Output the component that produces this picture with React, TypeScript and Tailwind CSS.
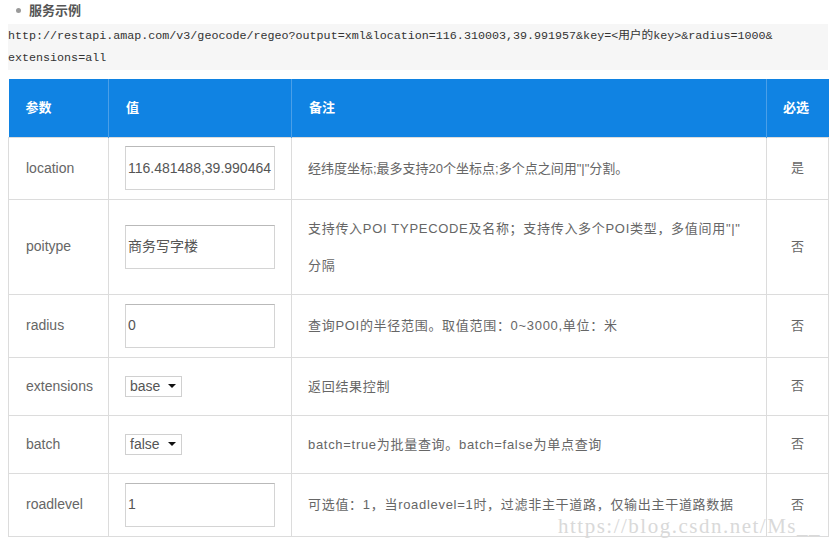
import React from "react";

const sans = '"Liberation Sans", Arial, "Noto Sans CJK SC", sans-serif';
const mono = '"Liberation Mono", "DejaVu Sans Mono", "Noto Sans CJK SC", monospace';

function TextInput({ value }: { value: string }) {
  return (
    <div className="w-[150px] h-[44px] border border-[#d4d4d4] border-t-[#b9b9b9] bg-white flex items-center pl-[2px] overflow-hidden whitespace-nowrap text-[14px] text-[#555]">
      {value}
    </div>
  );
}

function SelectBox({ value }: { value: string }) {
  return (
    <div className="w-[57px] h-[21px] border border-[#d0d0d0] bg-white flex items-center pl-[4px] pr-[5px] text-[14px] text-[#555] leading-none">
      <span className="flex-1">{value}</span>
      <span className="w-0 h-0 border-l-[4px] border-r-[4px] border-t-[4px] border-l-transparent border-r-transparent border-t-[#111]" />
    </div>
  );
}

type Row = {
  name: string;
  control: React.ReactNode;
  desc: React.ReactNode;
  req: string;
  h: string;
  wide: boolean;
};

const rows: Row[] = [
  {
    name: "location",
    control: <TextInput value="116.481488,39.990464" />,
    desc: '经纬度坐标;最多支持20个坐标点;多个点之间用"|"分割。',
    req: "是",
    h: "h-[62px]",
    wide: false,
  },
  {
    name: "poitype",
    control: <TextInput value="商务写字楼" />,
    desc: (
      <>
        支持传入POI TYPECODE及名称；支持传入多个POI类型，多值间用"|"
        <br />
        分隔
      </>
    ),
    req: "否",
    h: "h-[95px]",
    wide: true,
  },
  {
    name: "radius",
    control: <TextInput value="0" />,
    desc: "查询POI的半径范围。取值范围：0~3000,单位：米",
    req: "否",
    h: "h-[63px]",
    wide: true,
  },
  {
    name: "extensions",
    control: <SelectBox value="base" />,
    desc: "返回结果控制",
    req: "否",
    h: "h-[57px]",
    wide: true,
  },
  {
    name: "batch",
    control: <SelectBox value="false" />,
    desc: "batch=true为批量查询。batch=false为单点查询",
    req: "否",
    h: "h-[57px]",
    wide: true,
  },
  {
    name: "roadlevel",
    control: <TextInput value="1" />,
    desc: "可选值：1，当roadlevel=1时，过滤非主干道路，仅输出主干道路数据",
    req: "否",
    h: "h-[63px]",
    wide: true,
  },
];

export default function App() {
  return (
    <div className="relative w-[840px] h-[549px] bg-white overflow-hidden" style={{ fontFamily: sans }}>
      <div className="pl-[8px] pr-[12px]">
        <div className="h-[24px] flex items-center pl-[8px] pb-[3px]">
          <span className="w-[5px] h-[5px] rounded-full bg-[#9a9a9a] mr-[8px]" />
          <span className="text-[13px] font-bold text-[#555]">服务示例</span>
        </div>
        <div
          className="bg-[#f6f6f6] h-[46px] text-[11.7px] leading-[22px] text-[#333] pt-[1px]"
          style={{ fontFamily: mono }}
        >
          <div>http://restapi.amap.com/v3/geocode/regeo?output=xml&amp;location=116.310003,39.991957&amp;key=&lt;用户的key&gt;&amp;radius=1000&amp;</div>
          <div>extensions=all</div>
        </div>
        <table className="mt-[9px] w-[820px] border-collapse table-fixed">
          <colgroup>
            <col className="w-[100px]" />
            <col className="w-[183px]" />
            <col className="w-[475px]" />
            <col className="w-[62px]" />
          </colgroup>
          <thead>
            <tr className="h-[58px] bg-[#1083e3] text-white text-[13px] font-bold">
              <th className="text-left pl-[17px] border-r border-[#4a9fe8]">参数</th>
              <th className="text-left pl-[17px] border-r border-[#4a9fe8]">值</th>
              <th className="text-left pl-[17px] border-r border-[#4a9fe8]">备注</th>
              <th className="text-left pl-[16px]">必选</th>
            </tr>
          </thead>
          <tbody>
            {rows.map((r) => (
              <tr key={r.name} className={r.h}>
                <td className="border border-[#dcdcdc] pl-[17px] text-[14px] text-[#666] align-middle">{r.name}</td>
                <td className="border border-[#dcdcdc] pl-[16px] align-middle">{r.control}</td>
                <td
                  className={
                    r.wide
                      ? "border border-[#dcdcdc] pl-[16px] py-[10px] text-[13px] leading-[37px] text-[#666] align-middle tracking-[0.7px]"
                      : "border border-[#dcdcdc] pl-[16px] py-[10px] text-[13px] leading-[37px] text-[#666] align-middle"
                  }
                >
                  {r.desc}
                </td>
                <td className="border border-[#dcdcdc] text-center text-[13px] text-[#666] align-middle">{r.req}</td>
              </tr>
            ))}
          </tbody>
        </table>
      </div>
      <div
        className="absolute left-[558px] top-[511px] text-[21px] text-[#d9d9d9] tracking-[1.5px] pointer-events-none"
        style={{ fontFamily: '"Liberation Serif", "Times New Roman", serif' }}
      >
        https://blog.csdn.net/Ms__
      </div>
    </div>
  );
}
